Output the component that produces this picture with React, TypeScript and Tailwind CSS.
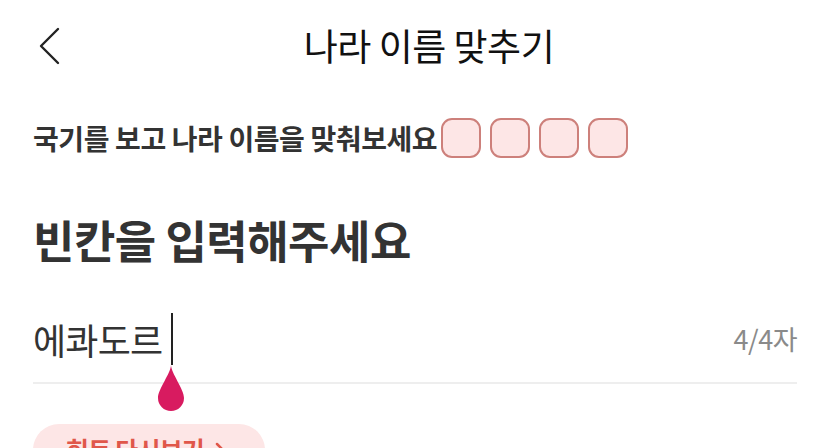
import { ChevronRight } from "lucide-react";

const font = { fontFamily: '"Noto Sans CJK KR", "Noto Sans", sans-serif' };

export default function App() {
  return (
    <div className="w-[830px] h-[448px] overflow-hidden bg-white" style={font}>
      <header className="relative flex items-center justify-center h-[92px]">
        <button className="absolute left-[36px] top-[26px] w-[26px] h-[40px] flex items-center justify-center">
          <svg width="22" height="38" viewBox="0 0 22 38" fill="none">
            <path d="M20 2 L3 19 L20 36" stroke="#222" strokeWidth="2.4" strokeLinecap="round" strokeLinejoin="round" />
          </svg>
        </button>
        <h1 className="ml-[28px] text-[37px] font-normal text-[#111] tracking-[-0.5px]">나라 이름 맞추기</h1>
      </header>

      <div className="px-[33px]">
        <div className="flex items-center mt-[26px] h-[40px]">
          <span className="text-[28px] font-bold text-[#333] tracking-[-0.4px] mr-[4px]">
            국기를 보고 나라 이름을 맞춰보세요
          </span>
          <div className="flex gap-[9px]">
            {[0, 1, 2, 3].map((i) => (
              <div key={i} className="w-[40px] h-[40px] rounded-[11px] bg-[#fde6e6] border-2 border-[#cd807b]" />
            ))}
          </div>
        </div>

        <h2 className="mt-[50px] text-[45px] leading-[64px] font-bold text-[#333] tracking-[-0.5px]">빈칸을 입력해주세요</h2>

        <div className="relative mt-[41px] flex items-center justify-between h-[52px]">
          <div className="flex items-center h-full">
            <span className="text-[36px] text-[#333] tracking-[-0.8px]">에콰도르</span>
            <div className="ml-[9px] w-[2px] h-[52px] bg-[#222]" />
          </div>
          <span className="text-[27px] text-[#8a8a8a] tracking-[-0.5px]">4/4자</span>
          <svg className="absolute left-[124px] top-[52px]" width="28" height="48" viewBox="0 0 28 48">
            <path d="M14 0 C14 8 1 24 1 33 A13 13 0 0 0 27 33 C27 24 14 8 14 0 Z" fill="#d81b60" />
          </svg>
        </div>

        <div className="mt-[17px] h-[2px] bg-[#eeeeee]" />

        <button className="mt-[40px] w-[232px] h-[52px] rounded-full bg-[#fde6e6] flex items-center justify-center gap-[4px] text-[#e0574a] text-[25px] font-bold tracking-[-0.8px]">
          힌트 다시보기 <ChevronRight className="w-[24px] h-[24px]" strokeWidth={2.5} />
        </button>
      </div>
    </div>
  );
}
